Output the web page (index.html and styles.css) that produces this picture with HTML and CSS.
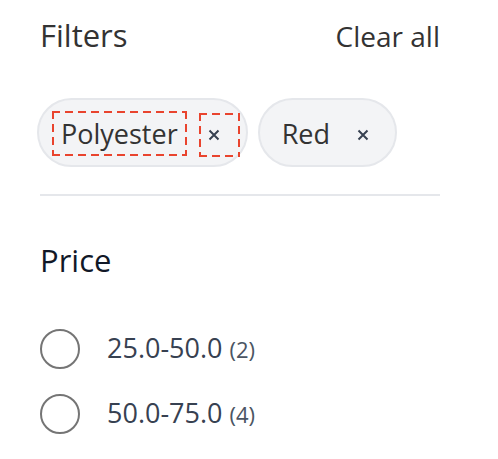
FILE: index.html
```html
<!DOCTYPE html>
<html lang="en">
<head>
<meta charset="utf-8">
<title>Filters</title>
<link rel="stylesheet" href="styles.css">
</head>
<body>
<aside class="filters">
  <div class="filters-head">
    <h2 class="heading">Filters</h2>
    <button class="clear-all" type="button">Clear all</button>
  </div>
  <div class="chips">
    <div class="chip">
      <span class="chip-label debug">Polyester</span>
      <button class="chip-remove debug" type="button" aria-label="Remove Polyester">
        <svg viewBox="0 0 12 12" width="12" height="12"><path d="M1.5 1.5 L10.5 10.5 M10.5 1.5 L1.5 10.5" /></svg>
      </button>
    </div>
    <div class="chip">
      <span class="chip-label">Red</span>
      <button class="chip-remove" type="button" aria-label="Remove Red">
        <svg viewBox="0 0 12 12" width="12" height="12"><path d="M1.5 1.5 L10.5 10.5 M10.5 1.5 L1.5 10.5" /></svg>
      </button>
    </div>
  </div>
  <hr class="divider">
  <h3 class="heading price-heading">Price</h3>
  <ul class="options">
    <li class="option"><span class="radio"></span><span class="option-label">25.0-50.0 <span class="count">(2)</span></span></li>
    <li class="option"><span class="radio"></span><span class="option-label">50.0-75.0 <span class="count">(4)</span></span></li>
  </ul>
</aside>
</body>
</html>
```
FILE: styles.css
```css
* { box-sizing: border-box; }
html, body { margin: 0; padding: 0; background: #ffffff; }
body { font-family: "Open Sans", "Noto Sans", sans-serif; color: #333333; }

.filters {
  width: 400px;
  margin-left: 40px;
  padding-top: 15px;
  display: flex;
  flex-direction: column;
}

.filters-head {
  display: flex;
  justify-content: space-between;
  align-items: baseline;
}

.heading {
  margin: 0;
  font-size: 31px;
  line-height: 40px;
  font-weight: 400;
  color: #333333;
}

.clear-all {
  border: 0;
  background: none;
  padding: 0;
  font-family: inherit;
  font-size: 28px;
  line-height: 40px;
  color: #333333;
}

.chips {
  margin-top: 42px;
  margin-left: -3px;
  display: flex;
  gap: 10px;
}

.chip {
  display: inline-flex;
  align-items: center;
  gap: 12px;
  height: 69px;
  padding: 0 6px 0 13px;
  border: 2px solid #e5e7eb;
  border-radius: 999px;
  background: #f3f4f6;
}

.chip-label {
  display: flex;
  align-items: center;
  height: 45px;
  padding: 0 9px;
  font-size: 27px;
  color: #333333;
  margin-top: 2px;
}

.chip-remove {
  display: flex;
  align-items: center;
  width: 41px;
  height: 44px;
  padding: 0 0 0 9px;
  border: 0;
  background: none;
  margin-top: 4px;
}

.chip + .chip .chip-remove { padding-left: 6px; width: 38px; }

.chip-remove svg path {
  stroke: #374151;
  stroke-width: 2;
  fill: none;
}

.debug {
  background:
    linear-gradient(90deg, #e9442e 8px, transparent 8px) 0 0 / 13px 2px repeat-x,
    linear-gradient(90deg, #e9442e 8px, transparent 8px) 0 100% / 13px 2px repeat-x,
    linear-gradient(180deg, #e9442e 8px, transparent 8px) 0 0 / 2px 13px repeat-y,
    linear-gradient(180deg, #e9442e 8px, transparent 8px) 100% 0 / 2px 13px repeat-y;
}

.divider {
  margin: 27px 0 0;
  border: 0;
  height: 2px;
  background: #e5e7eb;
}

.price-heading {
  margin-top: 44px;
  color: #111827;
}

.options {
  list-style: none;
  margin: 49px 0 0;
  padding: 0;
  display: flex;
  flex-direction: column;
  gap: 25px;
}

.option {
  display: flex;
  align-items: center;
  gap: 27px;
  height: 40px;
}

.radio {
  width: 40px;
  height: 40px;
  border: 2px solid #757575;
  border-radius: 50%;
  flex: none;
}

.option-label {
  font-size: 27px;
  line-height: 40px;
  color: #374151;
  margin-top: -2px;
}

.count {
  font-size: 22px;
  color: #4b5563;
}
```
